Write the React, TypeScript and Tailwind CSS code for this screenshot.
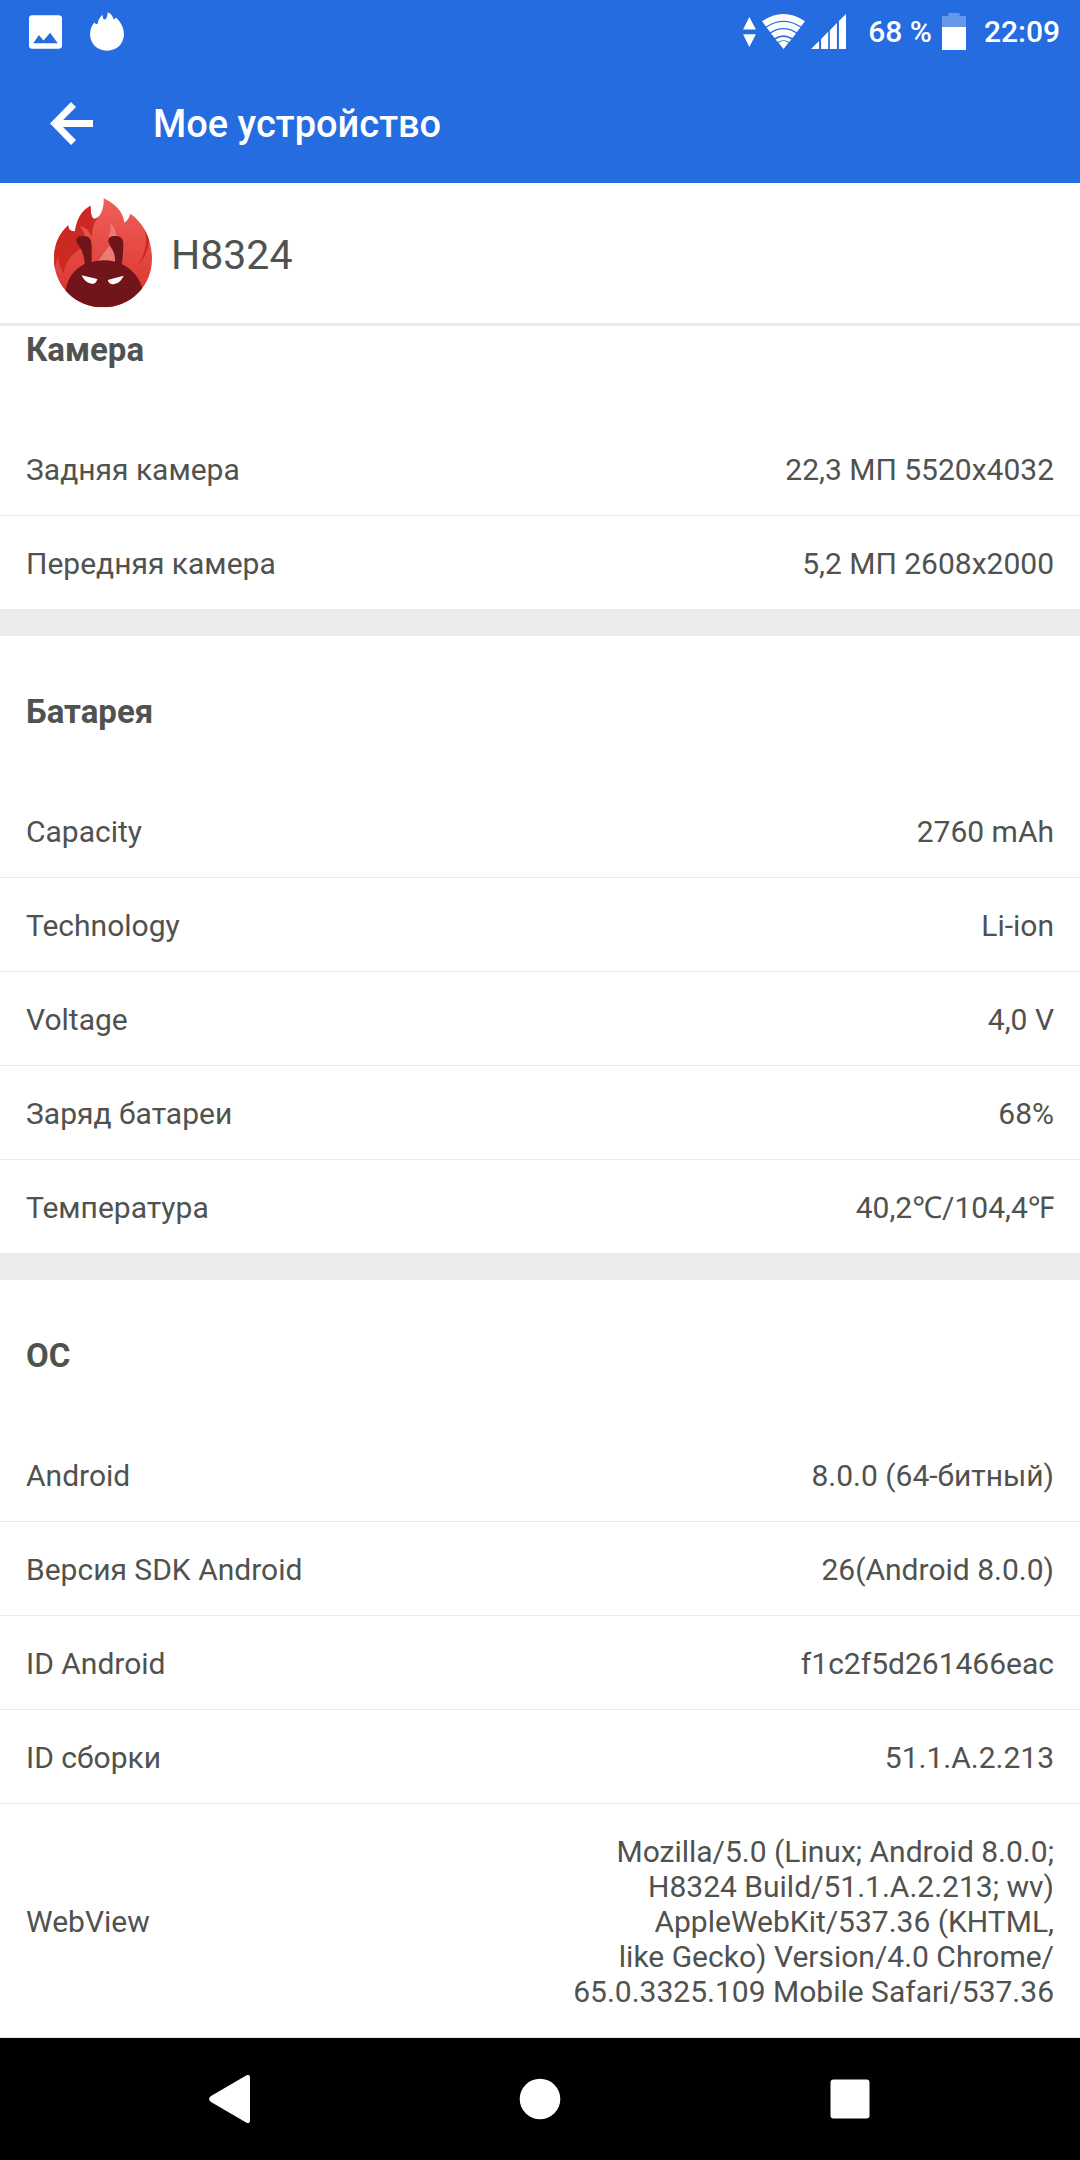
import type { ReactNode } from 'react'

type Row = { label: string; value: string }
type Section = { title: string; rows: Row[] }

const sections: Section[] = [
  {
    title: 'Камера',
    rows: [
      { label: 'Задняя камера', value: '22,3 МП 5520x4032' },
      { label: 'Передняя камера', value: '5,2 МП 2608x2000' },
    ],
  },
  {
    title: 'Батарея',
    rows: [
      { label: 'Capacity', value: '2760 mAh' },
      { label: 'Technology', value: 'Li-ion' },
      { label: 'Voltage', value: '4,0 V' },
      { label: 'Заряд батареи', value: '68%' },
      { label: 'Температура', value: '40,2℃/104,4℉' },
    ],
  },
  {
    title: 'ОС',
    rows: [
      { label: 'Android', value: '8.0.0 (64-битный)' },
      { label: 'Версия SDK Android', value: '26(Android 8.0.0)' },
      { label: 'ID Android', value: 'f1c2f5d261466eac' },
      { label: 'ID сборки', value: '51.1.A.2.213' },
      {
        label: 'WebView',
        value:
          'Mozilla/5.0 (Linux; Android 8.0.0; H8324 Build/51.1.A.2.213; wv) AppleWebKit/537.36 (KHTML, like\u00a0Gecko) Version/4.0 Chrome/\u200b65.0.3325.109 Mobile Safari/537.36',
      },
    ],
  },
]

function StatusBar() {
  return (
    <div className="flex h-[63px] items-center justify-between pr-5 pl-[29px] text-[30px] leading-9 font-medium">
      <div className="flex items-center gap-7">
        <svg viewBox="0 0 100 102" className="h-[34px] w-[33px]" fill="currentColor">
          <path
            fillRule="evenodd"
            d="M10 0H90Q100 0 100 10V92Q100 102 90 102H10Q0 102 0 92V10Q0 0 10 0ZM13 85H87L64 53L44 77L30 60Z"
          />
        </svg>
        <svg viewBox="0 0 102 116" className="h-[39px] w-[34px]" fill="currentColor">
          <path d="M13 31Q17 37 23 35Q24 20 38 8Q38 22 44 22Q52 20 53 0Q68 6 71 23Q74 18 79 17Q102 40 102 68Q98 112 51 116Q4 112 0 68Q0 46 13 31Z" />
        </svg>
      </div>

      <div className="flex items-center">
        <svg viewBox="0 0 39 91" className="mr-1.5 h-[30px] w-[13px]" fill="currentColor">
          <path d="M19 0L39 38H0ZM0 52H39L19 91Z" />
        </svg>
        <svg viewBox="0 0 130 106" className="mr-1.5 h-[35px] w-[43px]" fill="currentColor">
          <path d="M0 22Q65 -22 130 22L118 38Q65 3 12 38Z" />
          <path d="M14 41Q65 8 116 41L105 55Q65 30 25 55Z" />
          <path d="M27 59Q65 34 103 59L92 73Q65 56 38 73Z" />
          <path d="M41 77Q65 62 89 77L82 85Q65 74 48 85Z" />
          <path d="M50 87Q65 77 80 87L65 106Z" />
        </svg>
        <svg viewBox="0 0 104 104" className="mr-[22px] h-[35px] w-[35px]" fill="currentColor">
          <path d="M0 104L24 80V104ZM30 104V74L51 53V104ZM56 104V48L77 27V104ZM83 104V21L104 0V104Z" />
        </svg>
        <span>68 %</span>
        <svg viewBox="0 0 72 111" className="mr-[18px] ml-2.5 h-[37px] w-6" fill="currentColor">
          <path d="M0 42V9H19V0H53V9H72V42Z" opacity="0.3" />
          <path d="M0 42H72V111H0Z" />
        </svg>
        <time>22:09</time>
      </div>
    </div>
  )
}

function DeviceLogo() {
  return (
    <svg viewBox="24 21 300 333" className="h-[111px] w-[100px]">
      <defs>
        <linearGradient id="flame" x1="0" y1="0" x2="0" y2="1">
          <stop offset="0" stopColor="#f0605a" />
          <stop offset="1" stopColor="#d9302b" />
        </linearGradient>
        <clipPath id="body">
          <path d="M70 106C70 118 76 124 90 124C94 95 106 62 137 47C137 70 140 86 149 86C164 84 178 60 176 24C202 38 235 60 238 98C248 92 252 82 256 71C290 94 321 142 321 206C321 290 254 352 174 352C94 352 27 290 27 206C27 164 44 128 70 106Z" />
        </clipPath>
      </defs>
      <g clipPath="url(#body)">
        <path d="M20 20H330V360H20Z" fill="url(#flame)" />
        <path
          d="M20 20H137C137 70 140 86 149 86C154 86 158 84 162 78C146 96 140 118 141 142C130 122 118 114 104 109C118 124 122 140 118 156C112 188 66 184 56 250C44 230 38 218 42 198C34 210 28 230 30 250L20 250Z"
          fill="#cc2923"
        />
        <path d="M296 112C310 150 302 190 279 223C298 208 308 184 312 152L325 110Z" fill="#cc2923" />
        <path d="M104 109C126 112 138 126 141 152L120 146C122 130 116 120 104 109Z" fill="#e5524d" />
        <path d="M194 98C200 114 196 128 190 142L214 138C212 120 206 108 194 98Z" fill="#ea7b77" />
        <path d="M192 168L158 214H216C214 196 204 182 192 168Z" fill="#ea7b77" />
        <path
          d="M119 222C118 196 110 180 98 162C88 146 98 138 114 138C132 138 139 144 140 168V216Q174 206 210 215C211 196 206 182 194 164C184 148 194 138 208 138C228 138 235 144 235 164C234 184 234 202 230 222C262 236 286 268 292 296L270 360H80L62 302C68 262 90 236 119 222Z"
          fill="#70151a"
        />
      </g>
      <path d="M110 256L157 267C154 280 146 282 140 281C126 279 116 270 110 256Z" fill="#fff" />
      <path d="M236 257L188 270C192 282 200 284 208 282C222 279 230 270 236 257Z" fill="#fff" />
    </svg>
  )
}

function InfoSection({ title, rows }: Section) {
  return (
    <section className="border-b-[26px] border-[#ebebeb] last:border-b-0">
      <h2 className="px-[26px] pt-14 pb-[52px] text-[33px] leading-10 font-bold">{title}</h2>
      <dl className="text-[30px] leading-[35px]">
        {rows.map((row) => (
          <div
            key={row.label}
            className="flex items-center justify-between border-b border-[#ebebeb] px-[26px] pt-[30px] pb-[28px]"
          >
            <dt>{row.label}</dt>
            <dd className="max-w-[490px] text-right">{row.value}</dd>
          </div>
        ))}
      </dl>
    </section>
  )
}

function NavButton({ label, children }: { label: string; children: ReactNode }) {
  return (
    <button type="button" aria-label={label} className="flex h-full flex-1 items-center justify-center">
      <svg viewBox="0 0 48 48" className="size-12" fill="currentColor">
        {children}
      </svg>
    </button>
  )
}

export default function App() {
  return (
    <div className="flex h-screen flex-col bg-white font-[Roboto,'Noto_Sans',sans-serif] text-[#50524f]">
      <header className="shrink-0 bg-[#256ce1] text-white">
        <StatusBar />
        <div className="flex h-[120px] items-center pl-[50px]">
          <button type="button" aria-label="Назад">
            <svg viewBox="0 0 43 43" className="size-[43px]" fill="currentColor">
              <path d="M21 0L26 5L13 18H43V25H13L26 38L21 43L0 21.5Z" />
            </svg>
          </button>
          <h1 className="ml-[60px] pt-0.5 text-[38px] leading-[45px] font-medium">Мое устройство</h1>
        </div>
      </header>

      <div className="flex h-[143px] shrink-0 items-center gap-[18px] border-b-[3px] border-[#ebebeb] pb-px pl-[53px]">
        <DeviceLogo />
        <span className="pt-1 text-[41px] leading-[50px]">H8324</span>
      </div>

      {/* List is scrolled, so the first heading starts partly under the device bar */}
      <main className="min-h-0 flex-1 overflow-hidden">
        <div className="-mt-[52px]">
          {sections.map((section) => (
            <InfoSection key={section.title} {...section} />
          ))}
        </div>
      </main>

      <nav className="flex h-[122px] shrink-0 items-center bg-black px-[75px] text-white">
        <NavButton label="Назад">
          <path d="M41 0Q44 -1 44 3V45Q44 49 41 48L5 27Q1 24 5 21Z" />
        </NavButton>
        <NavButton label="Домой">
          <circle cx="24" cy="24" r="20.3" />
        </NavButton>
        <NavButton label="Обзор">
          <rect x="4.5" y="4.5" width="39" height="39" rx="3" />
        </NavButton>
      </nav>
    </div>
  )
}
